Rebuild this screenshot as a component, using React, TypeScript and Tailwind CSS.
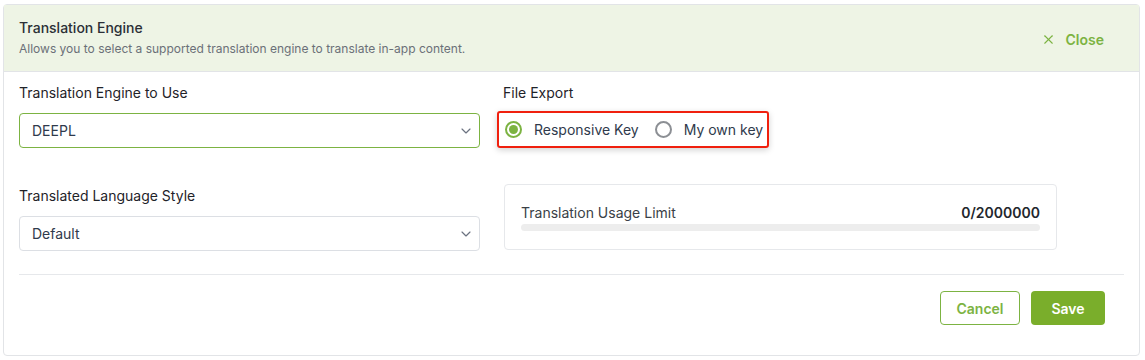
import React from 'react';
import { ChevronDown, X } from 'lucide-react';

function Select({ value, active }: { value: string; active?: boolean }) {
  return (
    <div
      className={`relative flex h-[35px] w-[461px] items-center rounded-[4px] border bg-white pl-[12px] text-[14px] text-[#2f3a4c] ${
        active ? 'border-[#7cb342]' : 'border-[#dcdfe4]'
      }`}
    >
      <span>{value}</span>
      <ChevronDown size={16} strokeWidth={1.75} className="absolute right-[5px] text-[#6b7280]" />
    </div>
  );
}

function Radio({ checked, label }: { checked?: boolean; label: string }) {
  return (
    <div className="flex items-center gap-[12px]">
      {checked ? (
        <span className="flex h-[17px] w-[17px] items-center justify-center rounded-full border-2 border-[#7cb342]">
          <span className="h-[9px] w-[9px] rounded-full bg-[#7cb342]" />
        </span>
      ) : (
        <span className="h-[17px] w-[17px] rounded-full border-2 border-[#8c8f94]" />
      )}
      <span className="text-[14px] text-[#2f3a4c]">{label}</span>
    </div>
  );
}

export default function App() {
  return (
    <div className="h-[360px] w-[1145px] bg-white pl-[3px] pt-[4px] font-['Inter',sans-serif]">
      <div className="flex h-[352px] w-[1137px] flex-col rounded-[4px] border border-[#e2e4e7]">
        {/* header */}
        <div className="flex h-[67px] items-center justify-between border-b border-[#e2e4e7] bg-[#eef4e5] pl-[15px] pr-[35px]">
          <div>
            <div className="text-[14px] font-medium leading-[18px] text-[#2b2f36]">Translation Engine</div>
            <div className="mt-[4px] text-[12px] leading-[16px] text-[#6b7078]">
              Allows you to select a supported translation engine to translate in-app content.
            </div>
          </div>
          <div className="mt-[3px] flex items-center gap-[10px] text-[14px] font-semibold text-[#7cb342]">
            <X size={15} strokeWidth={1.75} />
            <span>Close</span>
          </div>
        </div>

        {/* body */}
        <div className="flex flex-1 flex-col px-[15px]">
          <div className="mt-[12px] flex gap-[23px]">
            <div className="flex flex-col">
              <div className="text-[14px] leading-[18px] text-[#1f2329]">Translation Engine to Use</div>
              <div className="mt-[11px]">
                <Select value="DEEPL" active />
              </div>
            </div>
            <div className="flex flex-col">
              <div className="text-[14px] leading-[18px] text-[#1f2329]">File Export</div>
              <div className="ml-[-6px] mt-[9px] flex h-[37px] w-[272px] items-center gap-[16px] rounded-[3px] border-2 border-[#f0200e] pl-[6px] shadow-[0_2px_6px_rgba(0,0,0,0.18)]">
                <Radio checked label="Responsive Key" />
                <Radio label="My own key" />
              </div>
            </div>
          </div>

          <div className="mt-[39px] flex gap-[23px]">
            <div className="flex flex-col">
              <div className="text-[14px] leading-[18px] text-[#1f2329]">Translated Language Style</div>
              <div className="mt-[11px]">
                <Select value="Default" />
              </div>
            </div>
            <div className="ml-[1px] mt-[-3px] flex h-[66px] w-[553px] flex-col justify-center rounded-[4px] border border-[#e6e8eb] px-[16px]">
              <div className="flex items-end justify-between leading-[18px]">
                <span className="text-[14px] text-[#3a3f47]">Translation Usage Limit</span>
                <span className="text-[14px] font-semibold text-[#22262c]">0/2000000</span>
              </div>
              <div className="mt-[2px] h-[7px] w-full rounded-full bg-[#ededed]" />
            </div>
          </div>

          <div className="mt-[23px] border-t border-[#e6e8eb]" />

          <div className="mt-[16px] flex justify-end gap-[11px] pr-[19px]">
            <button className="flex h-[34px] w-[80px] items-center justify-center rounded-[4px] border border-[#7cb342] bg-white text-[14px] font-semibold text-[#7cb342]">
              Cancel
            </button>
            <button className="flex h-[34px] w-[74px] items-center justify-center rounded-[4px] bg-[#7aae2b] text-[14px] font-semibold text-white">
              Save
            </button>
          </div>
        </div>
      </div>
    </div>
  );
}
